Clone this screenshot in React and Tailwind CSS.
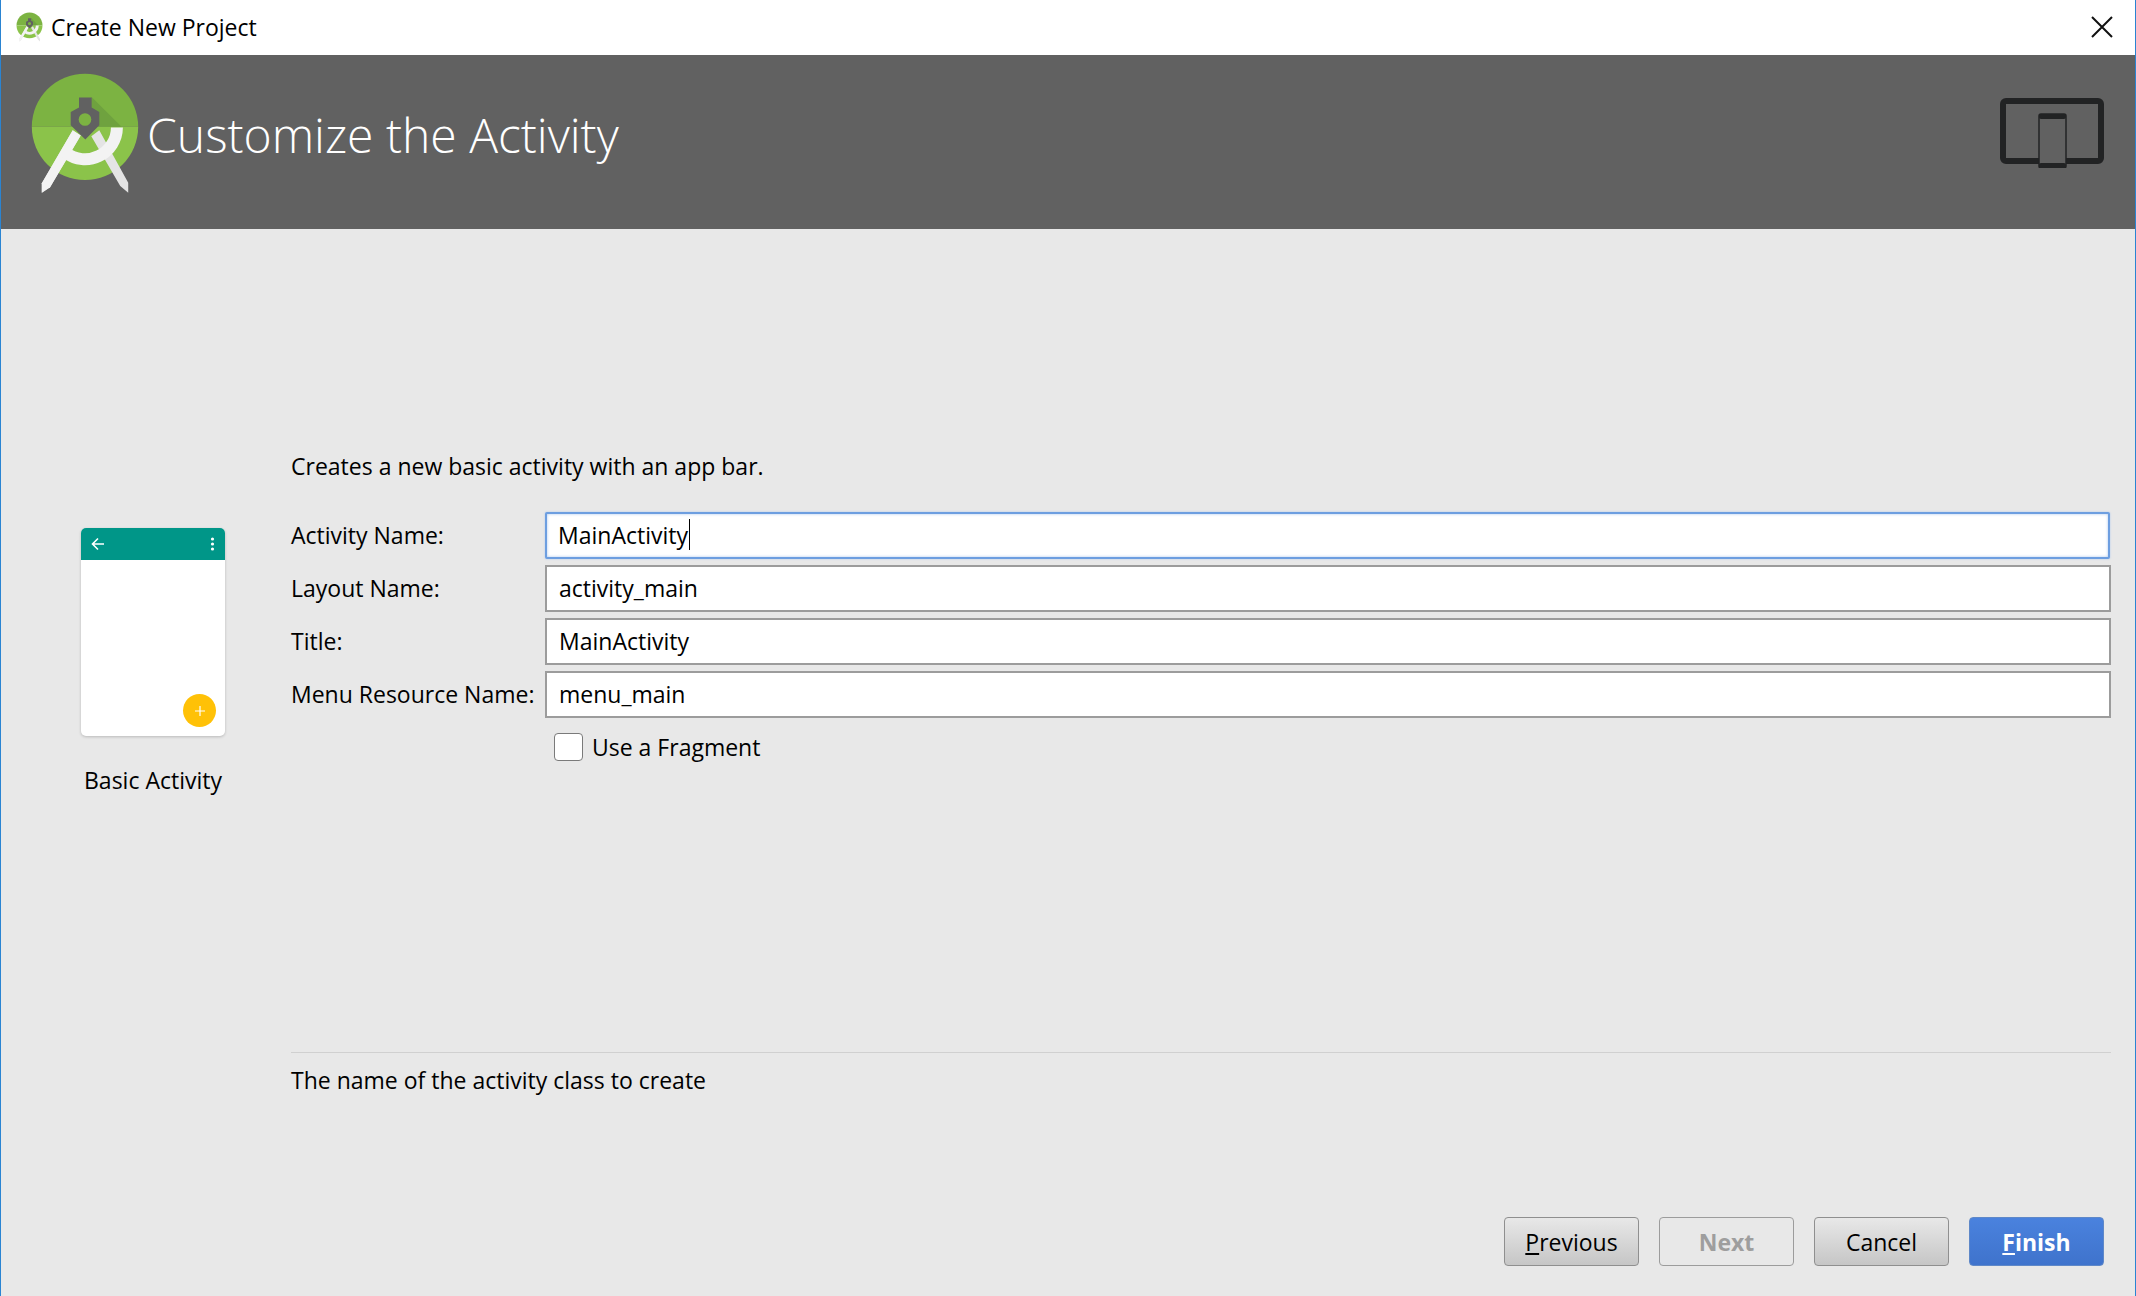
import React from 'react';

const Logo = ({ className }) => (
  <svg viewBox="90 65 330 370" className={className}>
    <path d="M95 230a160 160 0 0 1 320 0z" fill="#7cb342" />
    <path d="M95 230a160 160 0 0 0 320 0z" fill="#8bc34a" />
    <path d="M275 140l90 90h-75l-40-40z" fill="#6fa23f" />
    <path d="M218 240L125 400v28l25-16 92-156zM274 258l24-18 87 158v30l-24-20z" fill="#e4e4e4" />
    <path d="M218 240L125 400v28l25-16 92-156z" fill="#f3f3f3" />
    <path d="M351 232a96 96 0 0 1-154 76" fill="none" stroke="#f3f3f3" strokeWidth="36" />
    <path d="M237 142h38v30l23 13v40l-42 43-44-43v-40l25-13z" fill="#616161" />
    <circle cx="255" cy="208" r="19" fill="#7cb342" />
  </svg>
);

const DeviceIcon = () => (
  <svg width="104" height="70" viewBox="0 0 104 70" className="mt-[43px]">
    <rect x="3" y="3" width="98" height="60" rx="3" fill="none" stroke="#222324" strokeWidth="6" />
    <rect x="39" y="16" width="27" height="54" rx="2" fill="#616161" />
    <path d="M41 16h23a2 2 0 0 1 2 2v50a2 2 0 0 1-2 2H41a2 2 0 0 1-2-2V18a2 2 0 0 1 2-2z" fill="none" stroke="#222324" strokeWidth="1.5" />
    <rect x="39" y="16" width="27" height="5" rx="2" fill="#222324" />
    <rect x="39" y="65" width="27" height="5" rx="2" fill="#222324" />
  </svg>
);

const fields = [
  { label: 'Activity Name:', value: 'MainActivity', focused: true },
  { label: 'Layout Name:', value: 'activity_main' },
  { label: 'Title:', value: 'MainActivity' },
  { label: 'Menu Resource Name:', value: 'menu_main' },
];

const Field = ({ label, value, focused }) => (
  <div className="flex items-center h-[47px]">
    <div className="w-[254px] shrink-0 pb-[2px]">{label}</div>
    <div
      className={
        focused
          ? 'flex-1 h-full flex items-center bg-white pl-[11px] pb-[2px] mr-[1px] border-2 border-[#6d9ee0] rounded-[2px] shadow-[inset_0_0_3px_#a9c6ee,0_0_2px_#a9c6ee]'
          : 'flex-1 h-full flex items-center bg-white pl-[12px] pb-[2px] border-2 border-[#9c9c9c]'
      }
    >
      <span>{value}</span>
      {focused && <span className="w-px h-[31px] ml-[1px] bg-black" />}
    </div>
  </div>
);

const WizardButton = ({ children, variant = 'default' }) => {
  const styles = {
    default: 'bg-gradient-to-b from-[#e8e8e8] to-[#c6c6c6] border-[#8f8f8f] text-black',
    disabled: 'bg-[#e8e8e8] border-[#9c9c9c] text-[#9e9e9e] font-bold',
    primary: 'bg-gradient-to-b from-[#4a82de] to-[#3f73cc] border-[#5f88c8] text-white font-bold',
  };
  return (
    <div className={`w-[135px] h-[49px] flex items-center justify-center border rounded-[4px] ${styles[variant]}`}>
      {children}
    </div>
  );
};

export default function App() {
  return (
    <div className="w-[2136px] h-[1296px] flex flex-col bg-[#e8e8e8] border-x border-[#2a84d2] text-black text-[23px] leading-[30px] font-['Open_Sans',sans-serif] overflow-hidden">
      <div className="h-[55px] shrink-0 bg-white flex items-center pl-[15px] pr-[22px]">
        <Logo className="w-[27px] h-[30px] mb-[1px]" />
        <span className="ml-[8px] mb-[2px]">Create New Project</span>
        <svg width="22" height="22" viewBox="0 0 22 22" className="ml-auto mb-[2px]">
          <path d="M1 1l20 20M21 1L1 21" stroke="#111" strokeWidth="2" />
        </svg>
      </div>

      <div className="h-[174px] shrink-0 bg-[#616161] flex items-start pl-[29px] pr-[31px]">
        <Logo className="w-[110px] h-[123px] mt-[17px]" />
        <span className="ml-[7px] mt-[50px] text-[48px] leading-[60px] font-light text-white">Customize the Activity</span>
        <div className="ml-auto">
          <DeviceIcon />
        </div>
      </div>

      <div className="flex-1 flex min-h-0">
        <div className="w-[290px] shrink-0 flex flex-col items-center pt-[299px] pl-[14px]">
          <div className="w-[144px] h-[208px] bg-white rounded-[5px] shadow-[0_1px_3px_rgba(0,0,0,0.2)] overflow-hidden flex flex-col relative">
            <div className="h-[32px] bg-[#009688] flex items-center justify-between px-[10px]">
              <svg width="14" height="14" viewBox="0 0 14 14">
                <path d="M13 7H2M7 1.5L1.5 7 7 12.5" fill="none" stroke="#fff" strokeWidth="1.6" />
              </svg>
              <svg width="5" height="14" viewBox="0 0 5 14">
                <circle cx="2.5" cy="2" r="1.6" fill="#fff" />
                <circle cx="2.5" cy="7" r="1.6" fill="#fff" />
                <circle cx="2.5" cy="12" r="1.6" fill="#fff" />
              </svg>
            </div>
            <div className="absolute right-[9px] bottom-[9px] w-[33px] h-[33px] rounded-full bg-[#ffc107] flex items-center justify-center">
              <svg width="10" height="10" viewBox="0 0 10 10">
                <path d="M5 0v10M0 5h10" stroke="#fff" strokeWidth="1.2" />
              </svg>
            </div>
          </div>
          <div className="mt-[29px]">Basic Activity</div>
        </div>

        <div className="flex-1 flex flex-col pr-[24px] pt-[215px]">
          <div className="h-[44px] flex items-center">Creates a new basic activity with an app bar.</div>
          <div className="mt-[24px] flex flex-col gap-[6px]">
            {fields.map((f) => (
              <Field key={f.label} {...f} />
            ))}
          </div>
          <div className="mt-[15px] ml-[263px] flex items-center h-[28px]">
            <div className="w-[29px] h-[28px] bg-white border border-[#7a7a7a] rounded-[4px]" />
            <span className="ml-[9px]">Use a Fragment</span>
          </div>
          <div className="mt-[291px] border-t border-[#d0d0d0] pt-[12px]">The name of the activity class to create</div>
          <div className="mt-[122px] flex justify-end gap-[20px] pr-[7px]">
            <WizardButton>
              <span>
                <span className="underline">P</span>revious
              </span>
            </WizardButton>
            <WizardButton variant="disabled">Next</WizardButton>
            <WizardButton>Cancel</WizardButton>
            <WizardButton variant="primary">
              <span>
                <span className="underline">F</span>inish
              </span>
            </WizardButton>
          </div>
        </div>
      </div>
    </div>
  );
}
